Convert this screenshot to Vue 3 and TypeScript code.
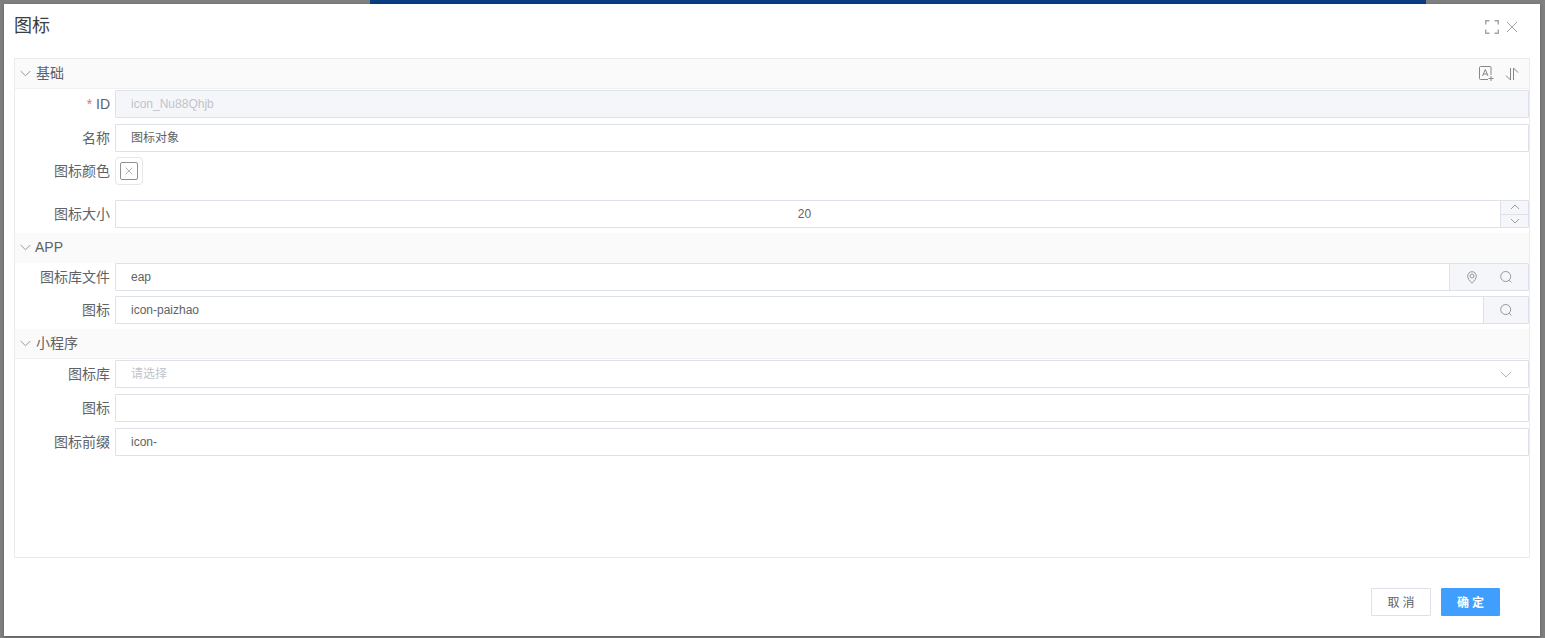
<script setup lang="ts">
const stripe = 'icon_Nu88Qhjb'
</script>

<template>
  <div class="page">
    <div class="backdrop-strip"></div>
    <div class="dialog">
      <header class="dialog-head">
        <span class="title">图标</span>
        <div class="head-tools">
          <svg width="14" height="14" viewBox="0 0 14 14" fill="none" stroke="#a3a5ab" stroke-width="1.5"><path d="M.7 4.5V.7h3.8M9.500 .7h3.800v3.800M13.300 9.500v3.800H9.500M4.500 13.300H.7V9.500"/></svg>
          <svg width="12" height="12" viewBox="0 0 12 12" fill="none" stroke="#a3a5ab" stroke-width="1"><path d="M1 1l10 10M11 1L1 11"/></svg>
        </div>
      </header>

      <section class="panel">
        <div class="group-head">
          <svg class="chev" width="11" height="7" viewBox="0 0 12 7" fill="none" stroke="#8d8f95"><path d="M.8.8L6 6l5.200-5.200"/></svg>
          <span class="group-title">基础</span>
          <div class="group-tools">
            <svg width="15" height="16" viewBox="0 0 15 16" fill="none" stroke="#85878d"><path d="M9 13.500H1.500q-1 0-1-1v-11q0-1 1-1h9.500q1 0 1 1V9"/><path d="M3.500 10L6.300 3.500 9 10M4.300 8h4M9.500 12.500h5M12 10v5"/></svg>
            <svg width="14" height="14" viewBox="0 0 14 14" fill="none" stroke="#85878d"><path d="M5.500 1v12L1 8.500M8.500 13V1L13 5.500"/></svg>
          </div>
        </div>

        <div class="row first">
          <label class="label latin"><i class="req">*</i> ID</label>
          <div class="input disabled">{{ stripe }}</div>
        </div>
        <div class="row">
          <label class="label">名称</label>
          <div class="input"><span class="cjk">图标对象</span></div>
        </div>
        <div class="row color-row">
          <label class="label">图标颜色</label>
          <div class="color-outer">
            <div class="color-inner">
              <svg width="8" height="8" viewBox="0 0 8 8" fill="none" stroke="#a9abb0" stroke-width=".9"><path d="M.6.6l6.800 6.800M7.400.6L.6 7.400"/></svg>
            </div>
          </div>
        </div>
        <div class="row">
          <label class="label">图标大小</label>
          <div class="input number">
            <span class="number-value">20</span>
            <div class="spin">
              <div class="spin-btn">
                <svg width="10" height="6" viewBox="0 0 10 6" fill="none" stroke="#9a9ca2"><path d="M1 5l4-4 4 4"/></svg>
              </div>
              <div class="spin-btn">
                <svg width="10" height="6" viewBox="0 0 10 6" fill="none" stroke="#9a9ca2"><path d="M1 1l4 4 4-4"/></svg>
              </div>
            </div>
          </div>
        </div>

        <div class="group-head second">
          <svg class="chev" width="11" height="7" viewBox="0 0 12 7" fill="none" stroke="#8d8f95"><path d="M.8.8L6 6l5.200-5.200"/></svg>
          <span class="group-title">APP</span>
        </div>
        <div class="row tight">
          <label class="label">图标库文件</label>
          <div class="input with-append">
            <span class="value">eap</span>
            <div class="append wide">
              <svg width="10" height="13" viewBox="0 0 10 13" fill="none" stroke="#95979d"><path d="M5 12.200C2.500 9.600.7 7.500.7 5a4.300 4.300 0 0 1 8.600 0c0 2.500-1.800 4.600-4.300 7.200z"/><circle cx="5" cy="5" r="2"/></svg>
              <svg width="12" height="12" viewBox="0 0 12 12" fill="none" stroke="#95979d"><circle cx="5.700" cy="5.500" r="5"/><path d="M9.200 9.200l2.200 2.200"/></svg>
            </div>
          </div>
        </div>
        <div class="row close">
          <label class="label">图标</label>
          <div class="input with-append">
            <span class="value">icon-paizhao</span>
            <div class="append">
              <svg width="12" height="12" viewBox="0 0 12 12" fill="none" stroke="#95979d"><circle cx="5.700" cy="5.500" r="5"/><path d="M9.200 9.200l2.200 2.200"/></svg>
            </div>
          </div>
        </div>

        <div class="group-head third">
          <svg class="chev" width="11" height="7" viewBox="0 0 12 7" fill="none" stroke="#8d8f95"><path d="M.8.8L6 6l5.200-5.200"/></svg>
          <span class="group-title">小程序</span>
        </div>
        <div class="row first">
          <label class="label">图标库</label>
          <div class="input select">
            <span class="placeholder cjk">请选择</span>
            <svg width="12" height="7" viewBox="0 0 12 7" fill="none" stroke="#b4b6bc"><path d="M.8.8L6 6l5.200-5.200"/></svg>
          </div>
        </div>
        <div class="row">
          <label class="label">图标</label>
          <div class="input"></div>
        </div>
        <div class="row">
          <label class="label">图标前缀</label>
          <div class="input">icon-</div>
        </div>
      </section>

      <footer class="dialog-foot">
        <button class="btn" type="button">取消</button>
        <button class="btn primary" type="button">确定</button>
      </footer>
    </div>
  </div>
</template>

<style>
html, body { margin: 0; background: #7f7f7f; overflow: hidden; }
</style>

<style scoped>
.page {
  position: relative;
  box-sizing: border-box;
  width: 1545px;
  height: 638px;
  padding: 4px 5px 2px 4px;
  background: #7f7f7f;
  font-family: "Liberation Sans", "Noto Sans CJK SC", sans-serif;
  color: #606266;
}
.backdrop-strip {
  position: absolute;
  left: 370px;
  top: 0;
  width: 1056px;
  height: 4px;
  background: #0a3d82;
}
.dialog {
  position: relative;
  display: flex;
  flex-direction: column;
  height: 632px;
  padding: 0 10px;
  box-sizing: border-box;
  background: #fff;
  box-shadow: 0 1px 3px rgba(0, 0, 0, 0.3);
}
.dialog-head {
  flex: none;
  height: 54px;
  display: flex;
  align-items: flex-start;
  justify-content: space-between;
}
.title {
  margin-top: 11px;
  font-size: 18px;
  line-height: 22px;
  color: #3c3e42;
}
.head-tools {
  display: flex;
  align-items: center;
  gap: 7px;
  margin-top: 16px;
  margin-right: 12px;
}
.panel {
  flex: none;
  box-sizing: border-box;
  height: 500px;
  border: 1px solid #ebebeb;
}
.group-head {
  box-sizing: border-box;
  display: flex;
  align-items: center;
  height: 30px;
  padding-left: 5px;
  background: #fafafa;
  border-bottom: 1px solid #f0f0f0;
  font-size: 14px;
  color: #606266;
}
.group-title { padding-bottom: 3px; }
.group-head.second,
.group-head.third { margin-top: 5px; }
.group-head.second { border-bottom: 0; }
.chev { margin-right: 5px; margin-top: -1px; }
.group-head.second .chev { margin-right: 4px; }
.group-tools {
  margin-left: auto;
  display: flex;
  align-items: center;
  gap: 11px;
  padding-right: 10px;
}
.row {
  display: flex;
  align-items: center;
  height: 28px;
  margin-top: 6px;
}
.row.first { margin-top: 1px; }
.row.tight { margin-top: 0; }
.row.close { margin-top: 5px; }
.color-row {
  margin-top: 5px;
  margin-bottom: 15px;
}
.label {
  flex: none;
  width: 100px;
  padding-right: 5px;
  padding-bottom: 3px;
  box-sizing: border-box;
  text-align: right;
  font-size: 14px;
  white-space: nowrap;
}
.label.latin { padding-bottom: 1px; }
.req {
  font-style: normal;
  color: #f56c6c;
}
.cjk { padding-bottom: 3px; }
.input {
  flex: 1;
  box-sizing: border-box;
  height: 28px;
  min-width: 0;
  display: flex;
  align-items: center;
  padding-left: 15px;
  border: 1px solid #dfe1ea;
  border-radius: 1px;
  font-size: 12px;
  background: #fff;
}
.disabled {
  background: #f5f6fa;
  color: #c0c4cc;
}
.number {
  position: relative;
  padding: 0;
}
.number-value {
  flex: 1;
  padding-right: 7px;
  text-align: center;
}
.spin {
  flex: none;
  width: 28px;
  height: 26px;
  display: flex;
  flex-direction: column;
  border-left: 1px solid #dfe1ea;
  background: #f5f6fa;
  box-sizing: border-box;
}
.spin-btn {
  flex: 1;
  display: flex;
  align-items: center;
  justify-content: center;
}
.spin-btn + .spin-btn { border-top: 1px solid #dfe1ea; }
.with-append {
  padding-right: 0;
  justify-content: space-between;
}
.append {
  flex: none;
  box-sizing: border-box;
  width: 45px;
  height: 26px;
  display: flex;
  align-items: center;
  justify-content: center;
  background: #f5f6fa;
  border-left: 1px solid #dfe1ea;
}
.append.wide {
  width: 79px;
  gap: 23px;
}
.select {
  justify-content: space-between;
  padding-right: 16px;
}
.placeholder { color: #c0c4cc; }
.color-outer {
  box-sizing: border-box;
  width: 28px;
  height: 28px;
  display: flex;
  align-items: center;
  justify-content: center;
  border: 1px solid #e6e6e6;
  border-radius: 4px;
}
.color-inner {
  box-sizing: border-box;
  width: 18px;
  height: 18px;
  display: flex;
  align-items: center;
  justify-content: center;
  border: 1px solid #8f9096;
  border-radius: 2px;
}
.dialog-foot {
  flex: none;
  display: flex;
  justify-content: flex-end;
  gap: 10px;
  padding-top: 30px;
  padding-right: 30px;
}
.btn {
  box-sizing: border-box;
  width: 60px;
  height: 28px;
  padding: 0 0 2px;
  border: 1px solid #dfe1ea;
  border-radius: 1px;
  background: #fff;
  color: #606266;
  font: inherit;
  font-size: 12px;
  letter-spacing: 3px;
  text-indent: 3px;
}
.btn.primary {
  width: 59px;
  border-color: #409eff;
  background: #409eff;
  color: #fff;
  font-weight: 700;
}
</style>
